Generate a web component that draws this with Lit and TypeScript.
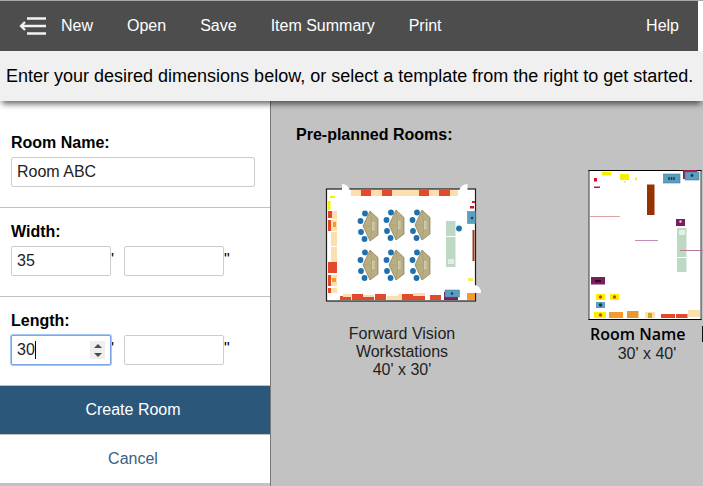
import { LitElement, html, css, svg } from "lit";
import { customElement, property } from "lit/decorators.js";

type Box = [x: number, y: number, w: number, h: number, fill: string];

const RED = "#e34a2b";
const CREAM = "#fbdfae";
const ORANGE = "#f59a2b";
const BLUE = "#5b9fc0";
const PLUM = "#7a1f5c";
const MINT = "#bdd9c3";

const boxes = (list: Box[]) =>
  list.map(([x, y, w, h, fill]) => svg`<rect x=${x} y=${y} width=${w} height=${h} fill=${fill}></rect>`);

/** Floor plan with six trapezoid workstations, each with four seats. */
@customElement("workstations-plan")
class WorkstationsPlan extends LitElement {
  static styles = css`
    :host { display: block; }
    svg { display: block; }
  `;

  private desk(x: number, y: number) {
    return svg`<g transform="translate(${x} ${y})">
      <path d="M7 -15 L15 -7.500 V9 L7 15 L0 0Z" fill="#b9ae82" stroke="#82795a" stroke-width="0.700"></path>
      <path d="M7 -15 L9 0 L7 15 M0 0 H9" fill="none" stroke="#9c9168" stroke-width="0.400"></path>
      <rect x="9" y="-4" width="2.500" height="8" fill="#d6d1b8"></rect>
      <path d="M10.200 -3 V3" stroke="#a39d86" stroke-width="0.500"></path>
      <circle cx="2" cy="-12.500" r="2.900" fill="#1e70ae"></circle>
      <circle cx="-2.500" cy="-5" r="2.900" fill="#1e70ae"></circle>
      <circle cx="-2" cy="6" r="2.900" fill="#1e70ae"></circle>
      <circle cx="1.500" cy="13" r="2.900" fill="#1e70ae"></circle>
    </g>`;
  }

  render() {
    return html`<svg width="164" height="132" viewBox="320 180 164 132" role="img" aria-label="Forward Vision Workstations plan">
      <rect x="326.500" y="189" width="149" height="112" fill="#fff" stroke="#1c1c1c" stroke-width="1.200"></rect>
      ${boxes([
        [351, 190, 10, 6, CREAM], [361, 190, 10, 6, RED], [371, 190, 11, 6, CREAM], [382, 190, 10, 6, RED],
        [392, 190, 27, 6, CREAM], [419, 190, 10, 6, RED], [429, 190, 10, 6, CREAM], [439, 190, 11, 6, RED],
        [450, 190, 8, 6, CREAM],
        [330, 196, 5, 2, "#f5f500"], [328, 201, 2.500, 9, "#f5f500"],
        [328, 211, 4, 7, RED], [332, 211, 5, 8, CREAM], [328, 220, 3, 11, RED], [331, 220, 6, 11, CREAM],
        [333, 222, 3, 5, ORANGE], [331, 232, 6, 14, CREAM], [331, 247, 6, 15, CREAM],
        [328, 262, 9, 11, RED], [328, 275, 3, 11, RED], [331, 275, 6, 11, CREAM], [332, 278, 4, 4, ORANGE],
        [328, 288, 3, 5, RED], [331, 288, 6, 5, CREAM],
        [340, 296, 11, 4, RED], [343, 294, 11, 3, CREAM], [352, 294, 11, 6, RED], [363, 295, 11, 2, CREAM],
        [363, 297, 11, 3, RED], [375, 294, 11, 6, RED], [387, 296, 11, 4, CREAM], [398, 294, 4, 6, CREAM],
        [402, 294, 11, 6, RED], [413, 293, 12, 3, CREAM], [413, 296, 12, 4, RED],
        [430, 295, 11, 5, RED], [467, 293, 8, 7, ORANGE],
        [446, 221, 9.500, 15, MINT], [446, 237, 9.500, 30, MINT], [448, 259, 6, 5, "#e2eee5"],
        [472.500, 230, 2, 31, "#a23c12"], [472, 201, 3, 2, "#d8203a"], [470, 206, 4, 2.500, "#b51c3c"],
        [468, 278, 5, 3, "#eef05a"],
        [444, 292, 14, 8, PLUM],
      ])}
      <rect x="467.500" y="211.500" width="8" height="12" fill=${BLUE} stroke="#467d98" stroke-width="0.500"></rect>
      <rect x="445" y="290" width="14.500" height="7" fill=${BLUE} stroke="#467d98" stroke-width="0.500"></rect>
      <circle cx="472" cy="218" r="1.300" fill="#17425a"></circle>
      <circle cx="452" cy="293.500" r="1.300" fill="#17425a"></circle>
      <circle cx="459" cy="228.500" r="2.900" fill="#1e70ae"></circle>
      ${[[363, 226], [389, 225], [415, 225], [363, 265], [389, 265], [415, 265]].map(([x, y]) => this.desk(x, y))}
      <path d="M342 191 V184 A8 8 0 0 1 350 191Z" fill="#fff"></path>
      <path d="M467.500 190 V184 A8 7 0 0 0 459.500 190Z" fill="#fff"></path>
      <path d="M474 293 H481 A7 7 0 0 0 474 285Z" fill="#fff"></path>
    </svg>`;
  }
}

/** Floor plan of the mostly empty sample room. */
@customElement("sample-plan")
class SamplePlan extends LitElement {
  static styles = css`
    :host { display: block; }
    svg { display: block; }
  `;

  render() {
    return html`<svg width="124" height="156" viewBox="585 168 124 156" role="img" aria-label="Room Name plan">
      <rect x="589" y="170.500" width="112" height="149" fill="#fff" stroke="#3c3c3c"></rect>
      <path d="M588.500 170.500 H701.500 M588.500 319.500 H701.500" stroke="#000"></path>
      ${boxes([
        [602, 172, 9, 3.500, "#f2f200"], [620, 174, 9, 6, "#f2f200"], [624, 181, 2, 1.500, "#f2e27a"],
        [635, 177.500, 2, 3, "#e9ef60"], [594, 178, 3, 3.500, "#d40f2e"], [594, 186.500, 6, 1.500, "#d40f2e"],
        [647, 184.500, 7.500, 30.500, "#963204"], [683, 170, 14, 9, "#a01845"],
        [676, 219, 9, 7, PLUM], [677, 228, 9.500, 29, MINT], [677, 258, 9.500, 14, MINT],
        [679, 230, 6, 5, "#e5efe7"],
        [591, 277, 14, 7.500, PLUM],
        [596, 294, 9, 6, "#fbf000"], [610, 294, 9, 6, "#fbf000"], [596, 302, 9, 6, BLUE],
        [594, 312, 12, 6, "#fbf000"], [609, 312, 14, 6, ORANGE], [627, 311, 11.500, 7, "#e39a30"],
        [645, 312, 10, 6, CREAM], [648, 313, 4, 5, "#d6a415"],
        [661, 314, 14, 4, RED], [676, 314, 11.500, 4, RED], [688, 310, 12, 7, CREAM],
      ])}
      <rect x="663.500" y="174" width="16.500" height="9" fill=${BLUE} stroke="#447e98" stroke-width="0.600"></rect>
      <rect x="685" y="172" width="14" height="8" fill=${BLUE} stroke="#447e98" stroke-width="0.600"></rect>
      <path d="M669 177 V180 M671.500 177 V180 M674 177 V180" stroke="#1b3c4b" stroke-width="1.500"></path>
      <circle cx="692" cy="175.500" r="1.400" fill="#173949"></circle>
      <circle cx="680.500" cy="221.500" r="1.200" fill="#e8d5e1"></circle>
      <path d="M595 281 H601" stroke="#2b0920" stroke-width="2"></path>
      <circle cx="600.500" cy="297" r="1.700" fill="#e03a12"></circle>
      <circle cx="614.500" cy="297" r="1.700" fill="#e03a12"></circle>
      <circle cx="600.500" cy="305" r="1.700" fill="#1c3442"></circle>
      <circle cx="600.500" cy="315" r="1.700" fill="#e03a12"></circle>
      <path d="M590 216.500 H620" stroke="#dba3a3"></path>
      <path d="M635 240.500 H658" stroke="#c48bbb"></path>
      <path d="M680 250.500 H709" stroke="#b5789a"></path>
    </svg>`;
  }
}

/** A labelled pair of boxes, feet and inches. */
@customElement("dimension-field")
class DimensionField extends LitElement {
  @property() label = "";
  @property() feet = "";
  @property({ type: Boolean }) active = false;

  static styles = css`
    :host {
      display: block;
      padding: 15px 11px 20px;
      border-bottom: 1px solid #c0c0c0;
    }
    label { display: block; font-weight: bold; line-height: 18px; margin-bottom: 5px; }
    .row { display: flex; }
    .box {
      box-sizing: border-box;
      position: relative;
      display: flex;
      align-items: center;
      width: 100px;
      height: 30px;
      border: 1px solid #ccc;
      border-radius: 2px;
      background: #fff;
    }
    .box.active { border-color: #7ba7ea; box-shadow: 0 0 0 1px #a5c5f5; }
    input {
      flex: 1;
      min-width: 0;
      height: 100%;
      padding: 0 5px;
      box-sizing: border-box;
      border: 0;
      outline: 0;
      background: none;
      color: #222;
      caret-color: transparent;
      font: inherit;
    }
    .caret { position: absolute; left: 23px; top: 5px; width: 1px; height: 18px; background: #000; }
    .unit { width: 13px; line-height: 28px; }
    .spin { display: flex; flex-direction: column; width: 15px; height: 18px; margin-right: 5px; background: #eee; }
    .spin button { flex: 1; display: flex; align-items: center; justify-content: center; padding: 0; border: 0; background: none; }
    .spin svg { display: block; }
  `;

  private step(by: number) {
    this.feet = String(Number(this.feet) + by);
  }

  render() {
    return html`
      <label for="feet">${this.label}:</label>
      <div class="row">
        <div class="box ${this.active ? "active" : ""}">
          <input id="feet" inputmode="numeric" .value=${this.feet} />
          ${this.active
            ? html`<span class="caret"></span>
              <div class="spin">
                <button aria-label="Increase" @click=${() => this.step(1)}>
                  <svg width="8" height="4" viewBox="0 0 8 4"><path d="M0 4 L4 0 L8 4Z" fill="#4c4c4c" /></svg>
                </button>
                <button aria-label="Decrease" @click=${() => this.step(-1)}>
                  <svg width="8" height="4" viewBox="0 0 8 4"><path d="M0 0 L4 4 L8 0Z" fill="#4c4c4c" /></svg>
                </button>
              </div>`
            : ""}
        </div>
        <span class="unit">'</span>
        <div class="box"><input inputmode="numeric" aria-label="${this.label} inches" /></div>
        <span class="unit">"</span>
      </div>
    `;
  }
}

@customElement("app-root")
class AppRoot extends LitElement {
  static styles = css`
    :host {
      display: flex;
      flex-direction: column;
      min-height: 100vh;
      overflow: hidden;
      background: #c2c2c2;
      color: #000;
      font: 16px/18px "Liberation Sans", Arial, sans-serif;
    }
    header { background: #fff; padding-right: 5px; border-top: 1px solid #a9a9a9; }
    nav {
      display: flex;
      align-items: center;
      gap: 34px;
      height: 50px;
      padding: 0 19px;
      background: #4d4d4d;
    }
    nav a { color: #fff; text-decoration: none; white-space: nowrap; }
    nav .new { display: flex; align-items: center; gap: 14px; }
    nav .help { margin-left: auto; }
    .banner {
      position: relative;
      margin: 0;
      padding: 0 6px;
      background: #f0f0f0;
      font-size: 18px;
      line-height: 50px;
      white-space: nowrap;
      box-shadow: 0 5px 6px -2px rgba(0, 0, 0, 0.6);
    }
    .body { display: flex; flex: 1; align-items: stretch; }
    aside { flex: 0 0 270px; border-right: 1px solid #777; }
    form { background: #fff; }
    .name { padding: 33px 15px 20px 11px; border-bottom: 1px solid #c0c0c0; }
    .name label { display: block; font-weight: bold; margin-bottom: 5px; }
    .name input {
      display: block;
      box-sizing: border-box;
      width: 100%;
      height: 30px;
      padding: 0 5px;
      border: 1px solid #ccc;
      border-radius: 2px;
      color: #222;
      font: inherit;
    }
    .action { display: block; width: 100%; height: 48px; padding: 0 4px 0 0; border: 0; font: inherit; }
    .create { background: #2b587a; color: #fff; }
    .cancel { background: #fff; color: #3a607f; height: 49px; border-top: 1px solid #c0c0c0; }
    main { flex: 1; min-width: 0; overflow: hidden; padding: 25px 0 24px 25px; }
    h2 { margin: 0 0 24px; font-size: 16px; line-height: 18px; }
    .rooms { display: flex; gap: 33px; }
    .room { flex: 0 0 212px; display: flex; flex-direction: column; align-items: center; color: #222; text-align: center; text-decoration: none; }
    .plan { display: flex; align-items: center; height: 156px; margin-bottom: 1px; }
    .title { width: 120px; }
    .edit {
      display: flex;
      align-items: center;
      justify-content: space-between;
      width: 114px;
      margin-bottom: 2px;
      color: #000;
      font-family: "Open Sans", "Noto Sans", sans-serif;
      font-weight: 600;
      white-space: nowrap;
    }
    .bar { width: 2px; height: 16px; background: #111; }
  `;

  render() {
    return html`
      <header>
        <nav>
          <a class="new" href="#new">
            <svg width="28" height="18" viewBox="0 0 28 18" fill="none" stroke="#f2f2f2" stroke-width="2.300" aria-hidden="true">
              <path d="M8 1.500 H27 M2 9 H27 M8 16.500 H27 M6 5 L2 9 L6 13" />
            </svg>
            New
          </a>
          <a href="#open">Open</a>
          <a href="#save">Save</a>
          <a href="#summary">Item Summary</a>
          <a href="#print">Print</a>
          <a class="help" href="#help">Help</a>
        </nav>
      </header>
      <p class="banner">Enter your desired dimensions below, or select a template from the right to get started.</p>
      <div class="body">
        <aside>
          <form @submit=${(e: Event) => e.preventDefault()}>
            <div class="name">
              <label for="name">Room Name:</label>
              <input id="name" value="Room ABC" />
            </div>
            <dimension-field label="Width" feet="35"></dimension-field>
            <dimension-field label="Length" feet="30" active></dimension-field>
            <button class="action create">Create Room</button>
            <button class="action cancel" type="button">Cancel</button>
          </form>
        </aside>
        <main>
          <h2>Pre-planned Rooms:</h2>
          <div class="rooms">
            <a class="room" href="#forward-vision">
              <span class="plan"><workstations-plan></workstations-plan></span>
              <span class="title">Forward Vision Workstations</span>
              <span>40' x 30'</span>
            </a>
            <a class="room" href="#room-name">
              <span class="plan"><sample-plan></sample-plan></span>
              <span class="edit">Room Name<span class="bar"></span></span>
              <span>30' x 40'</span>
            </a>
          </div>
        </main>
      </div>
    `;
  }
}
